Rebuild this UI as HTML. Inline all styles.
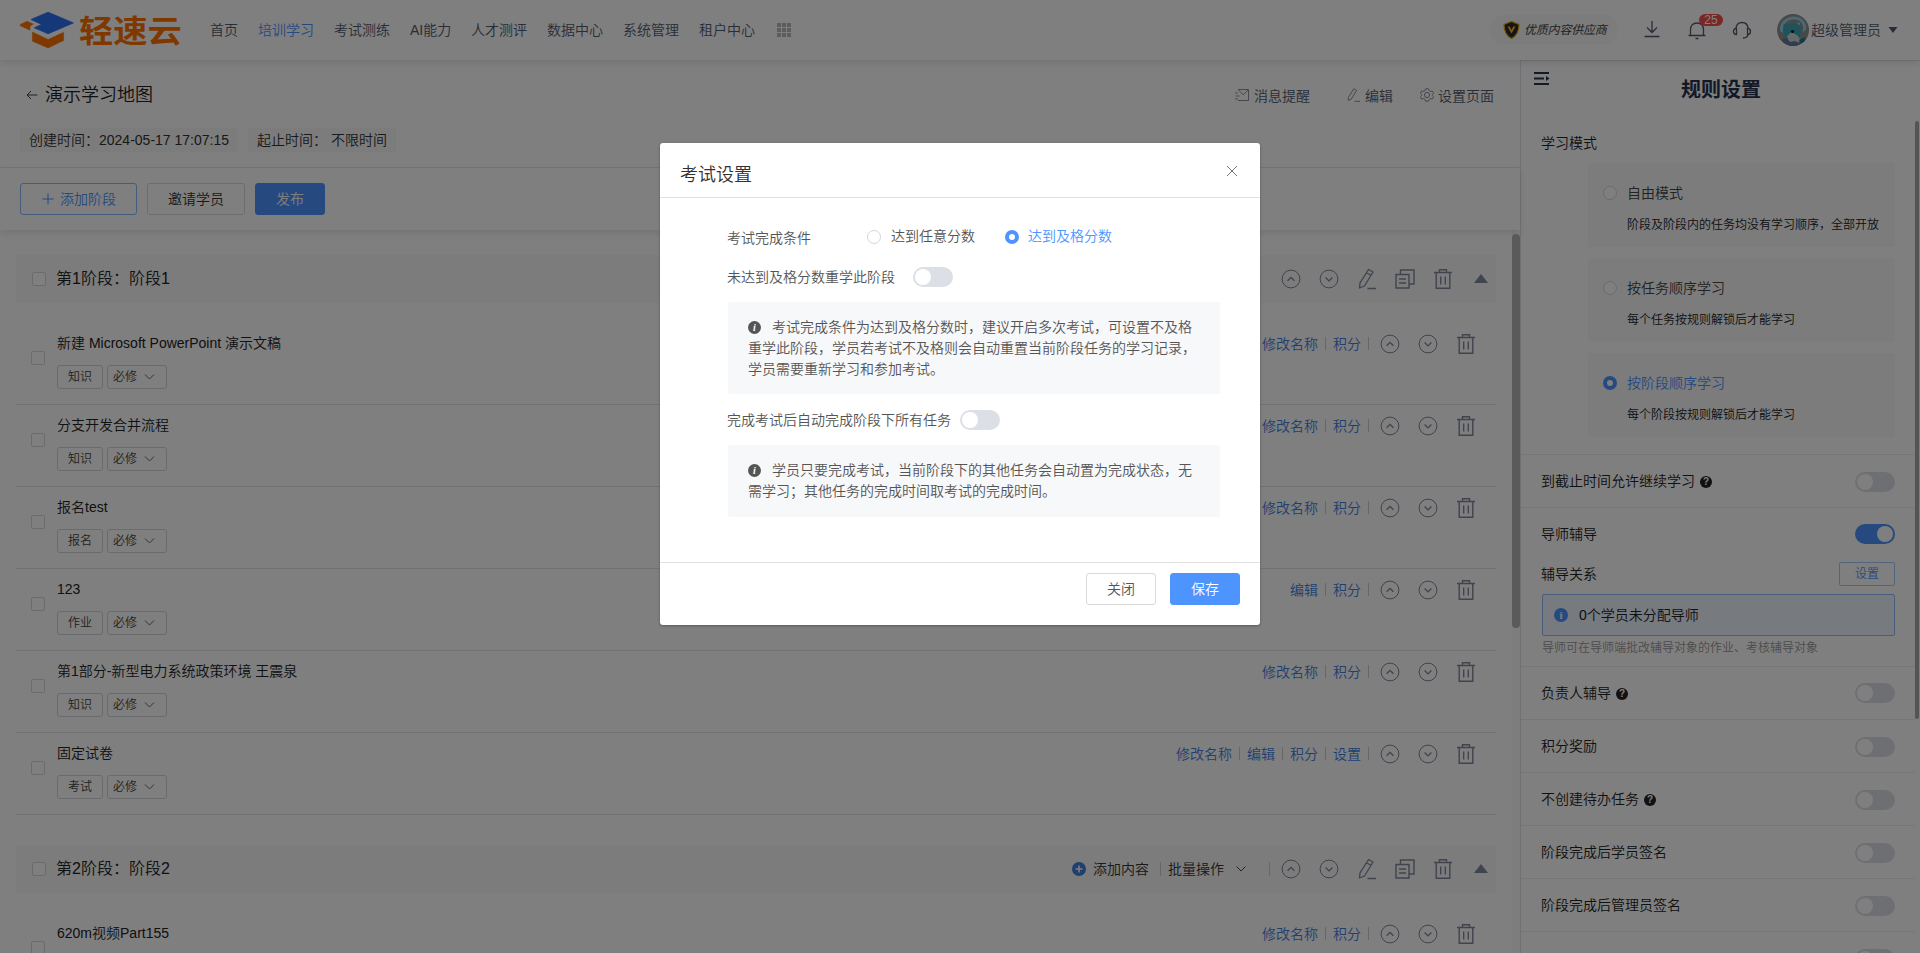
<!DOCTYPE html>
<html lang="zh-CN">
<head>
<meta charset="utf-8">
<title>演示学习地图</title>
<style>
*{box-sizing:border-box;margin:0;padding:0}
html,body{width:1920px;height:953px;overflow:hidden;background:#fff}
body{font-family:"Liberation Sans","Noto Sans CJK SC",sans-serif;font-size:14px;color:#333;position:relative;-webkit-font-smoothing:antialiased;font-weight:350}
.abs{position:absolute}
svg{display:block}
/* header */
#hdr{position:absolute;left:0;top:0;width:1920px;height:60px;background:#fff;box-shadow:0 2px 8px rgba(0,0,0,.12);z-index:5}
.nav{position:absolute;top:0;height:60px;line-height:60px;font-size:14px;color:#515a6e;white-space:nowrap}
.nav.on{color:#4d94ff}
#logotxt{position:absolute;left:79px;top:9.5px;font-size:31px;line-height:44px;font-weight:700;color:#ff7300;letter-spacing:0;white-space:nowrap;transform:scaleX(1.105);transform-origin:0 0}
/* title area */
#main{position:absolute;left:0;top:60px;width:1520px;height:893px;background:#fff}
.t14{position:absolute;font-size:14px;line-height:20px;white-space:nowrap}
.chip{position:absolute;top:68px;height:24px;line-height:24px;background:#f8f8f8;border-radius:2px;padding:0 9px;font-size:14px;color:#333;white-space:nowrap}
.btn{position:absolute;height:32px;line-height:30px;border:1px solid #d9d9d9;border-radius:3px;font-size:14px;text-align:center;background:#fff;color:#333;white-space:nowrap}
/* list */
.bar{position:absolute;left:16px;width:1480px;height:48px;background:#f8f8f8}
.bar .ttl{position:absolute;left:40px;top:0;line-height:47px;font-size:16px;color:#222;white-space:nowrap}
.cb{position:absolute;width:14px;height:14px;border:1px solid #d4d7de;border-radius:2px;background:#fff}
.item{position:absolute;left:16px;width:1480px;height:82px;border-bottom:1px solid #e4e4e4}
.item .nm{position:absolute;left:41px;top:10px;line-height:20px;font-size:14px;color:#222;white-space:nowrap}
.tag{position:absolute;top:42px;height:24px;line-height:22px;border:1px solid #d3d6de;border-radius:3px;font-size:12px;color:#444;text-align:center;background:#fff;white-space:nowrap}
.lk{position:absolute;top:11px;line-height:20px;font-size:14px;color:#3f7fe0;white-space:nowrap}
.sp{position:absolute;top:14px;width:1px;height:13px;background:#cfcfcf}
.ic{position:absolute}
/* right panel */
#side{position:absolute;left:1520px;top:60px;width:400px;height:893px;background:#fff;border-left:1px solid #dfe3ea;border-top:1px solid #e6e9f0}
.card{position:absolute;left:67px;width:307px;height:84px;background:#f8f8f8;border-radius:2px}
.rad{position:absolute;width:14px;height:14px;border:1px solid #d4d7de;border-radius:50%;background:#fff}
.rad.on{border:4px solid #4d94ff}
.row{position:absolute;left:0;width:394px;height:53px;border-top:1px solid #ebedf0}
.row .lb{position:absolute;left:20px;top:16px;line-height:20px;font-size:14px;color:#222;white-space:nowrap}
.sw{position:absolute;width:40px;height:20px;border-radius:10px;background:#dcdfe6}
.sw:after{content:"";position:absolute;left:2px;top:2px;width:16px;height:16px;border-radius:50%;background:#fff}
.sw.on{background:#4d94ff}
.sw.on:after{left:22px}
.q{display:inline-block;width:12px;height:12px;border-radius:50%;background:#222;color:#fff;font-size:10px;line-height:12px;text-align:center;font-weight:700;vertical-align:1px;margin-left:5px}
/* overlay + modal */
#mask{position:absolute;left:0;top:0;width:1920px;height:953px;background:rgba(0,0,0,.5);z-index:10}
#dlg{position:absolute;left:660px;top:143px;width:600px;height:482px;background:#fff;border-radius:3px;box-shadow:0 1px 3px rgba(0,0,0,.3);z-index:20;color:#555}
.note{position:absolute;left:68px;width:492px;background:#f7f8fa;border-radius:2px;padding:15px 20px 14px 20px;font-size:14px;line-height:21px;color:#555}
.inf{display:inline-block;width:13px;height:13px;border-radius:50%;background:#555;color:#fff;font-size:10px;line-height:13px;text-align:center;font-weight:700;font-style:italic;font-family:"Liberation Serif",serif;vertical-align:1px;margin-right:11px}
</style>
</head>
<body>
<div id="hdr">
  <svg class="abs" style="left:0;top:0" width="80" height="60" viewBox="0 0 80 60">
    <path d="M48.1 12.2 L73.4 22.9 L48.1 33.8 L34.2 27.8 L41.6 24.4 L31 19.5 Z" fill="#2a70f0" stroke="#2a70f0" stroke-width="0.8" stroke-linejoin="round"/>
    <path d="M20.2 24.6 L26.9 21.2 L33.3 24 L30 26.3 L30 30.2 L20.2 25.8 Z" fill="#ff7300" stroke="#ff7300" stroke-width="0.5" stroke-linejoin="round"/>
    <path d="M32.4 32 L48.1 39.4 L63.6 32.3 L63.6 40.5 L48.1 47.9 L32.4 41.2 Z" fill="#ff7300" stroke="#ff7300" stroke-width="0.5" stroke-linejoin="round"/>
  </svg>
  <div id="logotxt">轻速云</div>
  <div class="nav" style="left:210px">首页</div>
  <div class="nav on" style="left:258px">培训学习</div>
  <div class="nav" style="left:334px">考试测练</div>
  <div class="nav" style="left:410px">AI能力</div>
  <div class="nav" style="left:471px">人才测评</div>
  <div class="nav" style="left:547px">数据中心</div>
  <div class="nav" style="left:623px">系统管理</div>
  <div class="nav" style="left:699px">租户中心</div>
  <svg class="abs" style="left:777px;top:23px" width="14" height="14" viewBox="0 0 14 14" fill="#b8b8b8">
    <rect x="0" y="0" width="4" height="4"/><rect x="5" y="0" width="4" height="4"/><rect x="10" y="0" width="4" height="4"/>
    <rect x="0" y="5" width="4" height="4"/><rect x="5" y="5" width="4" height="4"/><rect x="10" y="5" width="4" height="4"/>
    <rect x="0" y="10" width="4" height="4"/><rect x="5" y="10" width="4" height="4"/><rect x="10" y="10" width="4" height="4"/>
  </svg>
  <div class="abs" style="left:1489px;top:15px;width:129px;height:29px;border-radius:15px;background:#f9f9f9"></div>
  <svg class="abs" style="left:1503px;top:21px" width="17" height="18" viewBox="0 0 17 18">
    <path d="M8.5 0.5 L16 3.5 C16 10 13.5 15 8.5 17.5 C3.5 15 1 10 1 3.5 Z" fill="#2b2b2b" stroke="#e5a823" stroke-width="1.2"/>
    <path d="M4.5 5.5 L8.5 12.5 L12.5 5.5 L10.3 5.5 L8.5 9 L6.7 5.5 Z" fill="#f5b92e"/>
  </svg>
  <div class="abs" style="left:1524px;top:20px;font-size:12px;line-height:20px;font-style:italic;font-weight:400;color:#444;letter-spacing:-0.2px;white-space:nowrap">优质内容供应商</div>
  <svg class="abs" style="left:1644px;top:20px" width="16" height="18" viewBox="0 0 16 18" fill="none" stroke="#515a6e" stroke-width="1.3">
    <path d="M8 1 V12 M3 7.5 L8 12.5 L13 7.5 M0.5 16.5 H15.5"/>
  </svg>
  <svg class="abs" style="left:1687px;top:20px" width="20" height="20" viewBox="0 0 20 20" fill="none" stroke="#515a6e" stroke-width="1.3">
    <path d="M1.5 15.5 H18.5 M3.5 15.5 V10 C3.5 5.5 6 3 10 3 C14 3 16.5 5.5 16.5 10 V15.5 M8.5 18.5 H11.5"/>
  </svg>
  <div class="abs" style="left:1699px;top:14px;width:24px;height:12px;border-radius:6px;background:#f5504e;color:#fff;font-size:12px;line-height:12px;text-align:center">25</div>
  <svg class="abs" style="left:1732px;top:20px" width="20" height="20" viewBox="0 0 20 20" fill="none" stroke="#515a6e" stroke-width="1.3">
    <path d="M4 9 C4 4.5 6.5 2.5 10 2.5 C13.5 2.5 16 4.5 16 9 M16 14 C16 17 14 18 11 18"/>
    <path d="M4.5 8.5 C2.5 8.5 1.5 9.5 1.5 11.5 C1.5 13.5 2.5 14.5 4.5 14.5 Z M15.5 8.5 C17.5 8.5 18.5 9.5 18.5 11.5 C18.5 13.5 17.5 14.5 15.5 14.5 Z"/>
  </svg>
  <svg class="abs" style="left:1777px;top:14px" width="32" height="32" viewBox="0 0 32 32">
    <defs><clipPath id="avc"><circle cx="16" cy="16" r="16"/></clipPath></defs>
    <g clip-path="url(#avc)">
      <rect width="32" height="32" fill="#8f9092"/>
      <path d="M3 17 C2 8 9 2.5 17 2.5 C25 2.5 30 9 29 15 C28 17 27 17.5 25.5 17.5 C28 11 24 5.5 17 5.5 C10 5.5 5 10 6 19 Z" fill="#98d0e4"/>
      <path d="M6.5 9.5 L11 11 L15 9 L19 10.5 L22 7 L23.5 13 L24 19 L21 25 L15 28 L9 25 L7 19 Z" fill="#3aa7b3"/>
      <path d="M20.5 9.5 L22.2 8 L22.6 11.5 Z" fill="#dfe9ec"/>
      <path d="M10 22 L14.5 18 L20 21 L23 25 L21 30 L12 30 Z" fill="#c9d6da"/>
      <circle cx="15.5" cy="17.5" r="1.6" fill="#10202a"/>
      <path d="M5 25 L10 24 L13 28 L18 27 L22 29 L27 25 L29 28 L24 33 L8 33 Z" fill="#66799c"/>
      <path d="M22 26 L28 23 L29 27 L25 30 Z" fill="#1f7d8c"/>
    </g>
  </svg>
  <div class="abs" style="left:1811px;top:20px;font-size:14px;line-height:20px;color:#515a6e;white-space:nowrap">超级管理员</div>
  <svg class="abs" style="left:1888px;top:27px" width="10" height="6" viewBox="0 0 10 6"><path d="M0.5 0 H9.5 L5 6 Z" fill="#515a6e"/></svg>
</div>

<div id="main">
<svg class="abs" style="left:26px;top:30px" width="12" height="10" viewBox="0 0 12 10" fill="none" stroke="#444" stroke-width="1"><path d="M11.5 5 H1 M5 1 L1 5 L5 9"/></svg>
<div class="abs" style="left:45px;top:22px;font-size:18px;line-height:26px;color:#222;white-space:nowrap">演示学习地图</div>
<svg class="abs" style="left:1235px;top:29px" width="14" height="12" viewBox="0 0 14 12" fill="none" stroke="#8c919e" stroke-width="1"><path d="M3 0.5 H13.5 V11.5 H3 M3.5 1 L8.3 6 L13 1 M0 4 H3 M0.5 7 H4.5 M0 10 H3"/></svg>
<div class="t14" style="left:1254px;top:26px;color:#515a6e">消息提醒</div>
<svg class="abs" style="left:1347px;top:28px" width="14" height="14" viewBox="0 0 14 14" fill="none" stroke="#8c919e" stroke-width="1" stroke-linejoin="round"><path d="M6.8 0.8 L9.6 2.4 L4.2 11.2 L1.2 12.4 L1.5 9.3 Z M7.5 13.3 H13"/></svg>
<div class="t14" style="left:1365px;top:26px;color:#515a6e">编辑</div>
<svg class="abs" style="left:1420px;top:28px" width="14" height="14" viewBox="0 0 14 14" fill="none" stroke="#8c919e" stroke-width="1"><circle cx="7" cy="7" r="2.6"/><path d="M5.6 0.8 H8.4 L9 2.5 L10.6 3.4 L12.4 3 L13.6 5.2 L12.4 6.5 V7.5 L13.6 8.8 L12.4 11 L10.6 10.6 L9 11.5 L8.4 13.2 H5.6 L5 11.5 L3.4 10.6 L1.6 11 L0.4 8.8 L1.6 7.5 V6.5 L0.4 5.2 L1.6 3 L3.4 3.4 L5 2.5 Z"/></svg>
<div class="t14" style="left:1438px;top:26px;color:#515a6e">设置页面</div>
<div class="chip" style="left:20px">创建时间：2024-05-17 17:07:15</div>
<div class="chip" style="left:248px">起止时间：&nbsp;不限时间</div>
<div class="abs" style="left:0;top:107px;width:1520px;height:1px;background:#e6e8ee"></div>
<div class="abs" style="left:0;top:108px;width:1520px;height:62px;background:#fff;box-shadow:0 3px 8px rgba(0,0,0,.10);z-index:2">
<div class="btn" style="left:20px;top:15px;width:117px;border-color:#8cb8ff;color:#4d94ff;text-align:left;padding-left:39px"><svg class="abs" style="left:21px;top:9px" width="12" height="12" viewBox="0 0 12 12" fill="none" stroke="#4d94ff" stroke-width="1"><path d="M6 0.5 V11.5 M0.5 6 H11.5"/></svg>添加阶段</div>
<div class="btn" style="left:147px;top:15px;width:98px">邀请学员</div>
<div class="btn" style="left:255px;top:15px;width:70px;background:#4d94ff;border-color:#4d94ff;color:#fff">发布</div>
</div>
<div class="abs" style="left:0;top:170px;width:1512px;height:723px;background:#fff"></div>
<div class="bar" style="top:195px"><div class="cb" style="left:16px;top:17px"></div><div class="ttl">第1阶段：阶段1</div>
<svg class="ic" style="left:1265px;top:14px" width="20" height="20" viewBox="0 0 20 20" fill="none" stroke="#80869a" stroke-width="1"><circle cx="10" cy="10" r="8.9"/><path d="M6.6 11.7 L10 8.3 L13.4 11.7" stroke-width="1.3"/></svg>
<svg class="ic" style="left:1303px;top:14px" width="20" height="20" viewBox="0 0 20 20" fill="none" stroke="#80869a" stroke-width="1"><circle cx="10" cy="10" r="8.9"/><path d="M6.6 8.5 L10 11.9 L13.4 8.5" stroke-width="1.3"/></svg>
<svg class="ic" style="left:1341px;top:13px" width="20" height="22" viewBox="0 0 20 22" fill="none" stroke="#82889c" stroke-width="1.3" stroke-linejoin="round"><path d="M11.5 1.5 L16 4 L7.5 18 L2.5 20 L3 14.8 Z M9.5 4.8 L14 7.3 M10.5 20.5 H19"/></svg>
<svg class="ic" style="left:1379px;top:14px" width="20" height="20" viewBox="0 0 20 20" fill="none" stroke="#82889c" stroke-width="1.4"><path d="M1 5.5 H14 V19 H1 Z M4 10 H11 M4 14 H11 M5.5 5.5 V1 H19 V15 H14"/></svg>
<svg class="ic" style="left:1417px;top:13px" width="20" height="22" viewBox="0 0 20 22" fill="none" stroke="#82889c" stroke-width="1.4"><path d="M1 4.5 H19 M6.5 4.5 V1.7 H13.5 V4.5 M3.2 4.5 V20.3 H16.8 V4.5 M7.7 8.5 V16.5 M12.3 8.5 V16.5"/></svg>
<svg class="ic" style="left:1458px;top:19px" width="14" height="9" viewBox="0 0 14 9"><path d="M7 0 L14 9 H0 Z" fill="#7e88a0"/></svg>
</div>
<div class="item" style="top:263px">
<div class="cb" style="left:15px;top:28px"></div>
<div class="nm">新建 Microsoft PowerPoint 演示文稿</div>
<div class="tag" style="left:41px;width:46px">知识</div>
<div class="tag" style="left:91px;width:60px;text-align:left;padding-left:5px">必修<svg class="ic" style="left:36px;top:8px" width="11" height="6" viewBox="0 0 10 6" fill="none" stroke="#666" stroke-width="1"><path d="M0.5 0.5 L5 5 L9.5 0.5"/></svg></div>
<div class="sp" style="left:1352px"></div>
<div class="lk" style="left:1317px">积分</div>
<div class="sp" style="left:1309px"></div>
<div class="lk" style="left:1246px">修改名称</div>
<svg class="ic" style="left:1364px;top:11px" width="20" height="20" viewBox="0 0 20 20" fill="none" stroke="#80869a" stroke-width="1"><circle cx="10" cy="10" r="8.9"/><path d="M6.6 11.7 L10 8.3 L13.4 11.7" stroke-width="1.3"/></svg>
<svg class="ic" style="left:1402px;top:11px" width="20" height="20" viewBox="0 0 20 20" fill="none" stroke="#80869a" stroke-width="1"><circle cx="10" cy="10" r="8.9"/><path d="M6.6 8.5 L10 11.9 L13.4 8.5" stroke-width="1.3"/></svg>
<svg class="ic" style="left:1440px;top:10px" width="20" height="22" viewBox="0 0 20 22" fill="none" stroke="#82889c" stroke-width="1.4"><path d="M1 4.5 H19 M6.5 4.5 V1.7 H13.5 V4.5 M3.2 4.5 V20.3 H16.8 V4.5 M7.7 8.5 V16.5 M12.3 8.5 V16.5"/></svg>
</div>
<div class="item" style="top:345px">
<div class="cb" style="left:15px;top:28px"></div>
<div class="nm">分支开发合并流程</div>
<div class="tag" style="left:41px;width:46px">知识</div>
<div class="tag" style="left:91px;width:60px;text-align:left;padding-left:5px">必修<svg class="ic" style="left:36px;top:8px" width="11" height="6" viewBox="0 0 10 6" fill="none" stroke="#666" stroke-width="1"><path d="M0.5 0.5 L5 5 L9.5 0.5"/></svg></div>
<div class="sp" style="left:1352px"></div>
<div class="lk" style="left:1317px">积分</div>
<div class="sp" style="left:1309px"></div>
<div class="lk" style="left:1246px">修改名称</div>
<svg class="ic" style="left:1364px;top:11px" width="20" height="20" viewBox="0 0 20 20" fill="none" stroke="#80869a" stroke-width="1"><circle cx="10" cy="10" r="8.9"/><path d="M6.6 11.7 L10 8.3 L13.4 11.7" stroke-width="1.3"/></svg>
<svg class="ic" style="left:1402px;top:11px" width="20" height="20" viewBox="0 0 20 20" fill="none" stroke="#80869a" stroke-width="1"><circle cx="10" cy="10" r="8.9"/><path d="M6.6 8.5 L10 11.9 L13.4 8.5" stroke-width="1.3"/></svg>
<svg class="ic" style="left:1440px;top:10px" width="20" height="22" viewBox="0 0 20 22" fill="none" stroke="#82889c" stroke-width="1.4"><path d="M1 4.5 H19 M6.5 4.5 V1.7 H13.5 V4.5 M3.2 4.5 V20.3 H16.8 V4.5 M7.7 8.5 V16.5 M12.3 8.5 V16.5"/></svg>
</div>
<div class="item" style="top:427px">
<div class="cb" style="left:15px;top:28px"></div>
<div class="nm">报名test</div>
<div class="tag" style="left:41px;width:46px">报名</div>
<div class="tag" style="left:91px;width:60px;text-align:left;padding-left:5px">必修<svg class="ic" style="left:36px;top:8px" width="11" height="6" viewBox="0 0 10 6" fill="none" stroke="#666" stroke-width="1"><path d="M0.5 0.5 L5 5 L9.5 0.5"/></svg></div>
<div class="sp" style="left:1352px"></div>
<div class="lk" style="left:1317px">积分</div>
<div class="sp" style="left:1309px"></div>
<div class="lk" style="left:1246px">修改名称</div>
<svg class="ic" style="left:1364px;top:11px" width="20" height="20" viewBox="0 0 20 20" fill="none" stroke="#80869a" stroke-width="1"><circle cx="10" cy="10" r="8.9"/><path d="M6.6 11.7 L10 8.3 L13.4 11.7" stroke-width="1.3"/></svg>
<svg class="ic" style="left:1402px;top:11px" width="20" height="20" viewBox="0 0 20 20" fill="none" stroke="#80869a" stroke-width="1"><circle cx="10" cy="10" r="8.9"/><path d="M6.6 8.5 L10 11.9 L13.4 8.5" stroke-width="1.3"/></svg>
<svg class="ic" style="left:1440px;top:10px" width="20" height="22" viewBox="0 0 20 22" fill="none" stroke="#82889c" stroke-width="1.4"><path d="M1 4.5 H19 M6.5 4.5 V1.7 H13.5 V4.5 M3.2 4.5 V20.3 H16.8 V4.5 M7.7 8.5 V16.5 M12.3 8.5 V16.5"/></svg>
</div>
<div class="item" style="top:509px">
<div class="cb" style="left:15px;top:28px"></div>
<div class="nm">123</div>
<div class="tag" style="left:41px;width:46px">作业</div>
<div class="tag" style="left:91px;width:60px;text-align:left;padding-left:5px">必修<svg class="ic" style="left:36px;top:8px" width="11" height="6" viewBox="0 0 10 6" fill="none" stroke="#666" stroke-width="1"><path d="M0.5 0.5 L5 5 L9.5 0.5"/></svg></div>
<div class="sp" style="left:1352px"></div>
<div class="lk" style="left:1317px">积分</div>
<div class="sp" style="left:1309px"></div>
<div class="lk" style="left:1274px">编辑</div>
<svg class="ic" style="left:1364px;top:11px" width="20" height="20" viewBox="0 0 20 20" fill="none" stroke="#80869a" stroke-width="1"><circle cx="10" cy="10" r="8.9"/><path d="M6.6 11.7 L10 8.3 L13.4 11.7" stroke-width="1.3"/></svg>
<svg class="ic" style="left:1402px;top:11px" width="20" height="20" viewBox="0 0 20 20" fill="none" stroke="#80869a" stroke-width="1"><circle cx="10" cy="10" r="8.9"/><path d="M6.6 8.5 L10 11.9 L13.4 8.5" stroke-width="1.3"/></svg>
<svg class="ic" style="left:1440px;top:10px" width="20" height="22" viewBox="0 0 20 22" fill="none" stroke="#82889c" stroke-width="1.4"><path d="M1 4.5 H19 M6.5 4.5 V1.7 H13.5 V4.5 M3.2 4.5 V20.3 H16.8 V4.5 M7.7 8.5 V16.5 M12.3 8.5 V16.5"/></svg>
</div>
<div class="item" style="top:591px">
<div class="cb" style="left:15px;top:28px"></div>
<div class="nm">第1部分-新型电力系统政策环境 王震泉</div>
<div class="tag" style="left:41px;width:46px">知识</div>
<div class="tag" style="left:91px;width:60px;text-align:left;padding-left:5px">必修<svg class="ic" style="left:36px;top:8px" width="11" height="6" viewBox="0 0 10 6" fill="none" stroke="#666" stroke-width="1"><path d="M0.5 0.5 L5 5 L9.5 0.5"/></svg></div>
<div class="sp" style="left:1352px"></div>
<div class="lk" style="left:1317px">积分</div>
<div class="sp" style="left:1309px"></div>
<div class="lk" style="left:1246px">修改名称</div>
<svg class="ic" style="left:1364px;top:11px" width="20" height="20" viewBox="0 0 20 20" fill="none" stroke="#80869a" stroke-width="1"><circle cx="10" cy="10" r="8.9"/><path d="M6.6 11.7 L10 8.3 L13.4 11.7" stroke-width="1.3"/></svg>
<svg class="ic" style="left:1402px;top:11px" width="20" height="20" viewBox="0 0 20 20" fill="none" stroke="#80869a" stroke-width="1"><circle cx="10" cy="10" r="8.9"/><path d="M6.6 8.5 L10 11.9 L13.4 8.5" stroke-width="1.3"/></svg>
<svg class="ic" style="left:1440px;top:10px" width="20" height="22" viewBox="0 0 20 22" fill="none" stroke="#82889c" stroke-width="1.4"><path d="M1 4.5 H19 M6.5 4.5 V1.7 H13.5 V4.5 M3.2 4.5 V20.3 H16.8 V4.5 M7.7 8.5 V16.5 M12.3 8.5 V16.5"/></svg>
</div>
<div class="item" style="top:673px">
<div class="cb" style="left:15px;top:28px"></div>
<div class="nm">固定试卷</div>
<div class="tag" style="left:41px;width:46px">考试</div>
<div class="tag" style="left:91px;width:60px;text-align:left;padding-left:5px">必修<svg class="ic" style="left:36px;top:8px" width="11" height="6" viewBox="0 0 10 6" fill="none" stroke="#666" stroke-width="1"><path d="M0.5 0.5 L5 5 L9.5 0.5"/></svg></div>
<div class="sp" style="left:1352px"></div>
<div class="lk" style="left:1317px">设置</div>
<div class="sp" style="left:1309px"></div>
<div class="lk" style="left:1274px">积分</div>
<div class="sp" style="left:1266px"></div>
<div class="lk" style="left:1231px">编辑</div>
<div class="sp" style="left:1223px"></div>
<div class="lk" style="left:1160px">修改名称</div>
<svg class="ic" style="left:1364px;top:11px" width="20" height="20" viewBox="0 0 20 20" fill="none" stroke="#80869a" stroke-width="1"><circle cx="10" cy="10" r="8.9"/><path d="M6.6 11.7 L10 8.3 L13.4 11.7" stroke-width="1.3"/></svg>
<svg class="ic" style="left:1402px;top:11px" width="20" height="20" viewBox="0 0 20 20" fill="none" stroke="#80869a" stroke-width="1"><circle cx="10" cy="10" r="8.9"/><path d="M6.6 8.5 L10 11.9 L13.4 8.5" stroke-width="1.3"/></svg>
<svg class="ic" style="left:1440px;top:10px" width="20" height="22" viewBox="0 0 20 22" fill="none" stroke="#82889c" stroke-width="1.4"><path d="M1 4.5 H19 M6.5 4.5 V1.7 H13.5 V4.5 M3.2 4.5 V20.3 H16.8 V4.5 M7.7 8.5 V16.5 M12.3 8.5 V16.5"/></svg>
</div>
<div class="bar" style="top:785px"><div class="cb" style="left:16px;top:17px"></div><div class="ttl">第2阶段：阶段2</div>
<svg class="ic" style="left:1056px;top:17px" width="14" height="14" viewBox="0 0 14 14"><circle cx="7" cy="7" r="7" fill="#3f7fe0"/><path d="M7 3.5 V10.5 M3.5 7 H10.5" stroke="#fff" stroke-width="1.6"/></svg>
<div class="t14" style="left:1077px;top:14px;color:#333">添加内容</div>
<div class="sp" style="left:1144px;top:17px;height:14px"></div>
<div class="t14" style="left:1152px;top:14px;color:#333">批量操作</div>
<svg class="ic" style="left:1220px;top:21px" width="10" height="6" viewBox="0 0 10 6" fill="none" stroke="#444" stroke-width="1"><path d="M0.5 0.5 L5 5 L9.5 0.5"/></svg>
<div class="sp" style="left:1253px;top:17px;height:14px"></div>
<svg class="ic" style="left:1265px;top:14px" width="20" height="20" viewBox="0 0 20 20" fill="none" stroke="#80869a" stroke-width="1"><circle cx="10" cy="10" r="8.9"/><path d="M6.6 11.7 L10 8.3 L13.4 11.7" stroke-width="1.3"/></svg>
<svg class="ic" style="left:1303px;top:14px" width="20" height="20" viewBox="0 0 20 20" fill="none" stroke="#80869a" stroke-width="1"><circle cx="10" cy="10" r="8.9"/><path d="M6.6 8.5 L10 11.9 L13.4 8.5" stroke-width="1.3"/></svg>
<svg class="ic" style="left:1341px;top:13px" width="20" height="22" viewBox="0 0 20 22" fill="none" stroke="#82889c" stroke-width="1.3" stroke-linejoin="round"><path d="M11.5 1.5 L16 4 L7.5 18 L2.5 20 L3 14.8 Z M9.5 4.8 L14 7.3 M10.5 20.5 H19"/></svg>
<svg class="ic" style="left:1379px;top:14px" width="20" height="20" viewBox="0 0 20 20" fill="none" stroke="#82889c" stroke-width="1.4"><path d="M1 5.5 H14 V19 H1 Z M4 10 H11 M4 14 H11 M5.5 5.5 V1 H19 V15 H14"/></svg>
<svg class="ic" style="left:1417px;top:13px" width="20" height="22" viewBox="0 0 20 22" fill="none" stroke="#82889c" stroke-width="1.4"><path d="M1 4.5 H19 M6.5 4.5 V1.7 H13.5 V4.5 M3.2 4.5 V20.3 H16.8 V4.5 M7.7 8.5 V16.5 M12.3 8.5 V16.5"/></svg>
<svg class="ic" style="left:1458px;top:19px" width="14" height="9" viewBox="0 0 14 9"><path d="M7 0 L14 9 H0 Z" fill="#7e88a0"/></svg>
</div>
<div class="item" style="top:853px">
<div class="cb" style="left:15px;top:28px"></div>
<div class="nm">620m视频Part155</div>
<div class="tag" style="left:41px;width:46px">知识</div>
<div class="tag" style="left:91px;width:60px;text-align:left;padding-left:5px">必修<svg class="ic" style="left:36px;top:8px" width="11" height="6" viewBox="0 0 10 6" fill="none" stroke="#666" stroke-width="1"><path d="M0.5 0.5 L5 5 L9.5 0.5"/></svg></div>
<div class="sp" style="left:1352px"></div>
<div class="lk" style="left:1317px">积分</div>
<div class="sp" style="left:1309px"></div>
<div class="lk" style="left:1246px">修改名称</div>
<svg class="ic" style="left:1364px;top:11px" width="20" height="20" viewBox="0 0 20 20" fill="none" stroke="#80869a" stroke-width="1"><circle cx="10" cy="10" r="8.9"/><path d="M6.6 11.7 L10 8.3 L13.4 11.7" stroke-width="1.3"/></svg>
<svg class="ic" style="left:1402px;top:11px" width="20" height="20" viewBox="0 0 20 20" fill="none" stroke="#80869a" stroke-width="1"><circle cx="10" cy="10" r="8.9"/><path d="M6.6 8.5 L10 11.9 L13.4 8.5" stroke-width="1.3"/></svg>
<svg class="ic" style="left:1440px;top:10px" width="20" height="22" viewBox="0 0 20 22" fill="none" stroke="#82889c" stroke-width="1.4"><path d="M1 4.5 H19 M6.5 4.5 V1.7 H13.5 V4.5 M3.2 4.5 V20.3 H16.8 V4.5 M7.7 8.5 V16.5 M12.3 8.5 V16.5"/></svg>
</div>
<div class="abs" style="left:1512px;top:170px;width:8px;height:723px;background:#fafafa;z-index:1"></div>
<div class="abs" style="left:1512px;top:174px;width:8px;height:394px;border-radius:4px;background:#b4b4b4;z-index:3"></div>
</div>
<div id="side">
<svg class="abs" style="left:13px;top:11px" width="16" height="13" viewBox="0 0 16 13" fill="none" stroke="#26324d" stroke-width="2"><path d="M0 1 H15 M0 6.5 H10 M0 12 H15"/><path d="M12 4 L15.5 6.5 L12 9 Z" fill="#26324d" stroke="none"/></svg>
<div class="abs" style="left:2px;top:14px;width:396px;text-align:center;font-size:20px;line-height:30px;font-weight:700;color:#26324d">规则设置</div>
<div class="t14" style="left:20px;top:72px;color:#222">学习模式</div>
<div class="card" style="top:102px">
<div class="rad" style="left:15px;top:23px"></div>
<div class="t14" style="left:39px;top:20px;color:#444">自由模式</div>
<div class="abs" style="left:39px;top:53px;font-size:12px;line-height:18px;color:#222;white-space:nowrap">阶段及阶段内的任务均没有学习顺序，全部开放</div>
</div>
<div class="card" style="top:197px">
<div class="rad" style="left:15px;top:23px"></div>
<div class="t14" style="left:39px;top:20px;color:#444">按任务顺序学习</div>
<div class="abs" style="left:39px;top:53px;font-size:12px;line-height:18px;color:#222;white-space:nowrap">每个任务按规则解锁后才能学习</div>
</div>
<div class="card" style="top:292px">
<div class="rad on" style="left:15px;top:23px"></div>
<div class="t14" style="left:39px;top:20px;color:#4d94ff">按阶段顺序学习</div>
<div class="abs" style="left:39px;top:53px;font-size:12px;line-height:18px;color:#222;white-space:nowrap">每个阶段按规则解锁后才能学习</div>
</div>
<div class="row" style="top:393px;height:53px">
<div class="lb">到截止时间允许继续学习<span class=q>?</span></div>
<div class="sw" style="left:334px;top:17px"></div>
</div>
<div class="row" style="top:446px;height:159px">
<div class="lb">导师辅导</div>
<div class="sw on" style="left:334px;top:16px"></div>
<div class="lb" style="top:56px">辅导关系</div>
<div class="abs" style="left:318px;top:54px;width:56px;height:24px;border:1px solid #a6c8ff;border-radius:2px;color:#4d94ff;font-size:12px;line-height:22px;text-align:center">设置</div>
<div class="abs" style="left:21px;top:86px;width:353px;height:42px;border:1px solid #8fbcff;border-radius:2px;background:#eef5ff"></div>
<div class="abs" style="left:33px;top:100px;width:14px;height:14px;border-radius:50%;background:#4d94ff;color:#fff;font-size:11px;line-height:14px;text-align:center;font-weight:700;font-family:'Liberation Serif',serif">i</div>
<div class="t14" style="left:58px;top:97px;color:#222">0个学员未分配导师</div>
<div class="abs" style="left:21px;top:131px;font-size:12px;line-height:18px;color:#999;white-space:nowrap">导师可在导师端批改辅导对象的作业、考核辅导对象</div>
</div>
<div class="row" style="top:605px;height:53px">
<div class="lb">负责人辅导<span class=q>?</span></div>
<div class="sw" style="left:334px;top:16px"></div>
</div>
<div class="row" style="top:658px;height:53px">
<div class="lb">积分奖励</div>
<div class="sw" style="left:334px;top:17px"></div>
</div>
<div class="row" style="top:711px;height:53px">
<div class="lb">不创建待办任务<span class=q>?</span></div>
<div class="sw" style="left:334px;top:17px"></div>
</div>
<div class="row" style="top:764px;height:53px">
<div class="lb">阶段完成后学员签名</div>
<div class="sw" style="left:334px;top:17px"></div>
</div>
<div class="row" style="top:817px;height:53px">
<div class="lb">阶段完成后管理员签名</div>
<div class="sw" style="left:334px;top:17px"></div>
</div>
<div class="row" style="top:870px;height:53px">
<div class="lb" style="top:18px">学员自评量表</div>
<div class="sw" style="left:334px;top:17px"></div>
</div>
<div class="abs" style="left:394px;top:60px;width:4px;height:598px;border-radius:2px;background:#a8a8a8"></div>
</div>
<div id="mask"></div>
<div id="dlg">
  <div class="abs" style="left:20px;top:18px;font-size:18px;line-height:28px;color:#303133;white-space:nowrap">考试设置</div>
  <svg class="abs" style="left:566px;top:22px" width="12" height="12" viewBox="0 0 12 12" fill="none" stroke="#777" stroke-width="1"><path d="M1 1 L11 11 M11 1 L1 11"/></svg>
  <div class="abs" style="left:0;top:54px;width:600px;height:1px;background:#e2e2e2"></div>
  <div class="t14" style="left:67px;top:85px;color:#555">考试完成条件</div>
  <div class="rad" style="left:207px;top:87px"></div>
  <div class="t14" style="left:231px;top:83px;color:#555">达到任意分数</div>
  <div class="rad on" style="left:345px;top:87px"></div>
  <div class="t14" style="left:368px;top:83px;color:#4d94ff">达到及格分数</div>
  <div class="t14" style="left:67px;top:124px;color:#555">未达到及格分数重学此阶段</div>
  <div class="sw" style="left:253px;top:124px"></div>
  <div class="note" style="top:159px;height:92px"><span class="inf">i</span>考试完成条件为达到及格分数时，建议开启多次考试，可设置不及格重学此阶段，学员若考试不及格则会自动重置当前阶段任务的学习记录，学员需要重新学习和参加考试。</div>
  <div class="t14" style="left:67px;top:267px;color:#555">完成考试后自动完成阶段下所有任务</div>
  <div class="sw" style="left:300px;top:267px"></div>
  <div class="note" style="top:302px;height:72px"><span class="inf">i</span>学员只要完成考试，当前阶段下的其他任务会自动置为完成状态，无需学习；其他任务的完成时间取考试的完成时间。</div>
  <div class="abs" style="left:0;top:419px;width:600px;height:1px;background:#e2e2e2"></div>
  <div class="btn" style="left:426px;top:430px;width:70px;color:#555">关闭</div>
  <div class="btn" style="left:510px;top:430px;width:70px;background:#4d94ff;border-color:#4d94ff;color:#fff">保存</div>
</div>

</body>
</html>
